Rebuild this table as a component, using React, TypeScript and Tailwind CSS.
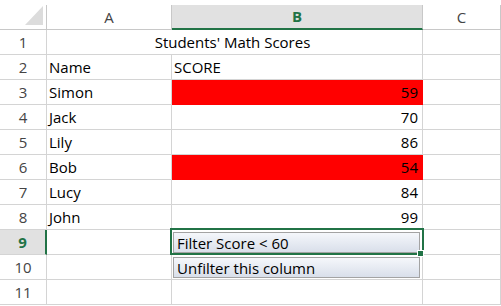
import React from 'react';

const FONT = { fontFamily: '"Open Sans", "Liberation Sans", sans-serif' };

type Row = { n: number; a?: string; b?: string; bAlign?: 'left' | 'right'; red?: boolean; button?: string };

const ROWS: Row[] = [
  { n: 1 },
  { n: 2, a: 'Name', b: 'SCORE', bAlign: 'left' },
  { n: 3, a: 'Simon', b: '59', red: true },
  { n: 4, a: 'Jack', b: '70' },
  { n: 5, a: 'Lily', b: '86' },
  { n: 6, a: 'Bob', b: '54', red: true },
  { n: 7, a: 'Lucy', b: '84' },
  { n: 8, a: 'John', b: '99' },
  { n: 9, button: 'Filter Score < 60' },
  { n: 10, button: 'Unfilter this column' },
  { n: 11 },
];

const cell = 'h-[25px] border-r border-b border-[#d4d4d4] flex items-end pb-[3px] text-[15px] leading-[18px] text-black';

function FormButton({ label }: { label: string }) {
  return (
    <div className="w-[247px] h-[21px] border border-[#a3a3a3] bg-gradient-to-b from-[#f5f7fb] to-[#d9dfea] text-[15px] leading-[17px] text-black pl-[3px] flex items-end whitespace-nowrap">
      {label}
    </div>
  );
}

export default function App() {
  return (
    <div className="w-[501px] h-[306px] bg-white overflow-hidden pt-[5px]" style={FONT}>
      <div className="grid grid-cols-[47px_125px_251px_78px]">
        {/* column headers */}
        <div className="h-[25px] border-r border-b border-[#c8c8c8] flex justify-end items-start pt-[1px] pr-[3px]">
          <div className="w-[18px] h-[19px] bg-[#dcdcdc] [clip-path:polygon(100%_0,100%_100%,0_100%)]" />
        </div>
        <div className="h-[25px] border-r border-b border-[#c8c8c8] flex items-center justify-center text-[15px] text-[#444]">
          A
        </div>
        <div className="h-[25px] border-r border-b-2 border-b-[#217346] border-r-[#c8c8c8] bg-[#e1e1e1] flex items-center justify-center text-[15px] font-bold text-[#217346]">
          B
        </div>
        <div className="h-[25px] border-r border-b border-[#c8c8c8] flex items-center justify-center text-[15px] text-[#444]">
          C
        </div>

        {ROWS.map((r) => (
          <React.Fragment key={r.n}>
            {r.n === 9 ? (
              <div className="h-[25px] border-r-2 border-r-[#217346] border-b border-b-[#d4d4d4] bg-[#e1e1e1] flex items-center justify-center text-[15px] font-bold text-[#217346]">
                {r.n}
              </div>
            ) : (
              <div className="h-[25px] border-r border-b border-[#d4d4d4] flex items-center justify-center text-[15px] text-[#444]">
                {r.n}
              </div>
            )}

            {r.n === 1 ? (
              <div className={`${cell} col-span-2 justify-center pr-[4px]`}>Students' Math Scores</div>
            ) : (
              <>
                <div className={`${cell} pl-[2px]`}>{r.a}</div>
                {r.button ? (
                  <div className="relative h-[25px] border-r border-b border-[#d4d4d4] pt-[2px] pl-[1px]">
                    <FormButton label={r.button} />
                    {r.n === 9 && (
                      <>
                        {/* active cell outline + fill handle */}
                        <div className="absolute -left-[2px] -top-[2px] w-[254px] h-[27px] border-2 border-[#217346] z-10" />
                        <div className="absolute left-[245px] top-[20px] w-[7px] h-[7px] bg-[#217346] border border-white z-20" />
                      </>
                    )}
                  </div>
                ) : (
                  <div
                    className={`${cell} ${r.bAlign === 'left' ? 'pl-[2px]' : 'justify-end pr-[4px]'} ${
                      r.red ? 'bg-[#ff0000] border-[#ff0000]' : ''
                    }`}
                  >
                    {r.b}
                  </div>
                )}
              </>
            )}
            <div className="h-[25px] border-r border-b border-[#d4d4d4]" />
          </React.Fragment>
        ))}
      </div>
    </div>
  );
}
